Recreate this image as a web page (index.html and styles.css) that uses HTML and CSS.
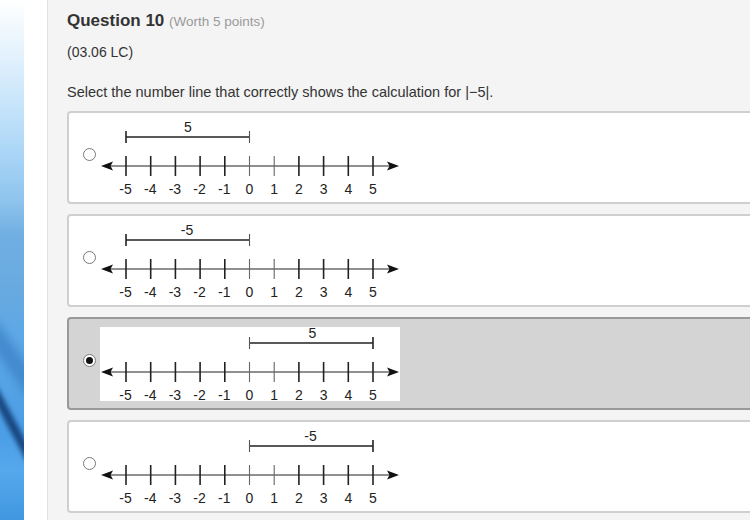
FILE: index.html
```html
<!DOCTYPE html>
<html>
<head>
<meta charset="utf-8">
<link rel="stylesheet" href="styles.css">
</head>
<body>
<div class="page">
  <div class="sidebar"></div>
  <div class="gutter"></div>
  <main class="main">
    <h1 class="title">Question 10 <span class="worth">(Worth 5 points)</span></h1>
    <p class="code">(03.06 LC)</p>
    <p class="prompt">Select the number line that correctly shows the calculation for |−5|.</p>
    <div class="options">
      <div class="option">
        <span class="radio"></span>
        <svg class="nl" viewBox="0 -5 300 84" width="300" height="84">
          <rect width="300" height="74" fill="#fff"/>
          <g stroke="#222" stroke-width="1.6">
            <line x1="10" y1="45" x2="290" y2="45" stroke-width="1.2"/>
            <line x1="26" y1="35" x2="26" y2="55"/><line x1="50.7" y1="35" x2="50.7" y2="55"/><line x1="75.4" y1="35" x2="75.4" y2="55"/><line x1="100.1" y1="35" x2="100.1" y2="55"/><line x1="124.8" y1="35" x2="124.8" y2="55"/><line x1="149.5" y1="35" x2="149.5" y2="55" stroke="#666" stroke-width="1.1"/><line x1="174.2" y1="35" x2="174.2" y2="55" stroke="#666" stroke-width="1.1"/><line x1="198.9" y1="35" x2="198.9" y2="55"/><line x1="223.6" y1="35" x2="223.6" y2="55"/><line x1="248.3" y1="35" x2="248.3" y2="55"/><line x1="273" y1="35" x2="273" y2="55"/>
            <line x1="26" y1="16" x2="149.5" y2="16"/><line x1="26" y1="10" x2="26" y2="22"/><line x1="149.5" y1="10" x2="149.5" y2="22" stroke="#555" stroke-width="1.1"/>
          </g>
          <path d="M1 45 L13 40.5 L10.5 45 L13 49.5 Z" fill="#111"/>
          <path d="M299 45 L287 40.5 L289.5 45 L287 49.5 Z" fill="#111"/>
          <g class="lbl" text-anchor="middle">
            <text x="88" y="10.5">5</text>
            <text x="25.5" y="73">-5</text><text x="50.2" y="73">-4</text><text x="74.9" y="73">-3</text><text x="99.6" y="73">-2</text><text x="124.3" y="73">-1</text><text x="149.5" y="73">0</text><text x="174.2" y="73">1</text><text x="198.9" y="73">2</text><text x="223.6" y="73">3</text><text x="248.3" y="73">4</text><text x="273" y="73">5</text>
          </g>
        </svg>
      </div>
      <div class="option">
        <span class="radio"></span>
        <svg class="nl" viewBox="0 -5 300 84" width="300" height="84">
          <rect width="300" height="74" fill="#fff"/>
          <g stroke="#222" stroke-width="1.6">
            <line x1="10" y1="45" x2="290" y2="45" stroke-width="1.2"/>
            <line x1="26" y1="35" x2="26" y2="55"/><line x1="50.7" y1="35" x2="50.7" y2="55"/><line x1="75.4" y1="35" x2="75.4" y2="55"/><line x1="100.1" y1="35" x2="100.1" y2="55"/><line x1="124.8" y1="35" x2="124.8" y2="55"/><line x1="149.5" y1="35" x2="149.5" y2="55" stroke="#666" stroke-width="1.1"/><line x1="174.2" y1="35" x2="174.2" y2="55" stroke="#666" stroke-width="1.1"/><line x1="198.9" y1="35" x2="198.9" y2="55"/><line x1="223.6" y1="35" x2="223.6" y2="55"/><line x1="248.3" y1="35" x2="248.3" y2="55"/><line x1="273" y1="35" x2="273" y2="55"/>
            <line x1="26" y1="16" x2="149.5" y2="16"/><line x1="26" y1="10" x2="26" y2="22"/><line x1="149.5" y1="10" x2="149.5" y2="22" stroke="#555" stroke-width="1.1"/>
          </g>
          <path d="M1 45 L13 40.5 L10.5 45 L13 49.5 Z" fill="#111"/>
          <path d="M299 45 L287 40.5 L289.5 45 L287 49.5 Z" fill="#111"/>
          <g class="lbl" text-anchor="middle">
            <text x="87" y="10.5">-5</text>
            <text x="25.5" y="73">-5</text><text x="50.2" y="73">-4</text><text x="74.9" y="73">-3</text><text x="99.6" y="73">-2</text><text x="124.3" y="73">-1</text><text x="149.5" y="73">0</text><text x="174.2" y="73">1</text><text x="198.9" y="73">2</text><text x="223.6" y="73">3</text><text x="248.3" y="73">4</text><text x="273" y="73">5</text>
          </g>
        </svg>
      </div>
      <div class="option selected">
        <span class="radio"></span>
        <svg class="nl" viewBox="0 -5 300 84" width="300" height="84">
          <rect width="300" height="74" fill="#fff"/>
          <g stroke="#222" stroke-width="1.6">
            <line x1="10" y1="45" x2="290" y2="45" stroke-width="1.2"/>
            <line x1="26" y1="35" x2="26" y2="55"/><line x1="50.7" y1="35" x2="50.7" y2="55"/><line x1="75.4" y1="35" x2="75.4" y2="55"/><line x1="100.1" y1="35" x2="100.1" y2="55"/><line x1="124.8" y1="35" x2="124.8" y2="55"/><line x1="149.5" y1="35" x2="149.5" y2="55" stroke="#666" stroke-width="1.1"/><line x1="174.2" y1="35" x2="174.2" y2="55" stroke="#666" stroke-width="1.1"/><line x1="198.9" y1="35" x2="198.9" y2="55"/><line x1="223.6" y1="35" x2="223.6" y2="55"/><line x1="248.3" y1="35" x2="248.3" y2="55"/><line x1="273" y1="35" x2="273" y2="55"/>
            <line x1="149.5" y1="16" x2="273" y2="16"/><line x1="149.5" y1="10" x2="149.5" y2="22" stroke="#555" stroke-width="1.1"/><line x1="273" y1="10" x2="273" y2="22"/>
          </g>
          <path d="M1 45 L13 40.5 L10.5 45 L13 49.5 Z" fill="#111"/>
          <path d="M299 45 L287 40.5 L289.5 45 L287 49.5 Z" fill="#111"/>
          <g class="lbl" text-anchor="middle">
            <text x="212.5" y="10.5">5</text>
            <text x="25.5" y="73">-5</text><text x="50.2" y="73">-4</text><text x="74.9" y="73">-3</text><text x="99.6" y="73">-2</text><text x="124.3" y="73">-1</text><text x="149.5" y="73">0</text><text x="174.2" y="73">1</text><text x="198.9" y="73">2</text><text x="223.6" y="73">3</text><text x="248.3" y="73">4</text><text x="273" y="73">5</text>
          </g>
        </svg>
      </div>
      <div class="option">
        <span class="radio"></span>
        <svg class="nl" viewBox="0 -5 300 84" width="300" height="84">
          <rect width="300" height="74" fill="#fff"/>
          <g stroke="#222" stroke-width="1.6">
            <line x1="10" y1="45" x2="290" y2="45" stroke-width="1.2"/>
            <line x1="26" y1="35" x2="26" y2="55"/><line x1="50.7" y1="35" x2="50.7" y2="55"/><line x1="75.4" y1="35" x2="75.4" y2="55"/><line x1="100.1" y1="35" x2="100.1" y2="55"/><line x1="124.8" y1="35" x2="124.8" y2="55"/><line x1="149.5" y1="35" x2="149.5" y2="55" stroke="#666" stroke-width="1.1"/><line x1="174.2" y1="35" x2="174.2" y2="55" stroke="#666" stroke-width="1.1"/><line x1="198.9" y1="35" x2="198.9" y2="55"/><line x1="223.6" y1="35" x2="223.6" y2="55"/><line x1="248.3" y1="35" x2="248.3" y2="55"/><line x1="273" y1="35" x2="273" y2="55"/>
            <line x1="149.5" y1="16" x2="273" y2="16"/><line x1="149.5" y1="10" x2="149.5" y2="22" stroke="#555" stroke-width="1.1"/><line x1="273" y1="10" x2="273" y2="22"/>
          </g>
          <path d="M1 45 L13 40.5 L10.5 45 L13 49.5 Z" fill="#111"/>
          <path d="M299 45 L287 40.5 L289.5 45 L287 49.5 Z" fill="#111"/>
          <g class="lbl" text-anchor="middle">
            <text x="210.5" y="10.5">-5</text>
            <text x="25.5" y="73">-5</text><text x="50.2" y="73">-4</text><text x="74.9" y="73">-3</text><text x="99.6" y="73">-2</text><text x="124.3" y="73">-1</text><text x="149.5" y="73">0</text><text x="174.2" y="73">1</text><text x="198.9" y="73">2</text><text x="223.6" y="73">3</text><text x="248.3" y="73">4</text><text x="273" y="73">5</text>
          </g>
        </svg>
      </div>
    </div>
  </main>
</div>
</body>
</html>
```
FILE: styles.css
```css
html, body {
  margin: 0;
  padding: 0;
  width: 750px;
  height: 520px;
  overflow: hidden;
  background: #f4f4f4;
}
body {
  font-family: "Liberation Sans", Arial, sans-serif;
  color: #333;
}
.page {
  display: flex;
  height: 520px;
}
.sidebar {
  position: relative;
  overflow: hidden;
  flex: 0 0 24px;
  background: linear-gradient(180deg,
    #ffffff 0px,
    #e6f3fd 50px,
    #c4e3fa 110px,
    #a6d3f6 160px,
    #8fc4ed 200px,
    #70afe2 235px,
    #68aae0 290px,
    #5ea8e6 330px,
    #56a3e4 380px,
    #4a9de6 430px,
    #55a8ec 470px,
    #4198e0 520px);
}
.sidebar::before {
  content: "";
  position: absolute;
  left: -28px;
  top: 350px;
  width: 80px;
  height: 18px;
  background: #3a7fc4;
  filter: blur(5px);
  transform: rotate(55deg);
  opacity: 0.7;
}
.sidebar::after {
  content: "";
  position: absolute;
  left: -28px;
  top: 420px;
  width: 80px;
  height: 9px;
  background: #17467f;
  filter: blur(2.5px);
  transform: rotate(62deg);
}
.gutter {
  flex: 0 0 23px;
  background: #fff;
}
.main {
  flex: 1 0 auto;
  border-left: 1px solid #e2e2e2;
  padding: 11px 0 0 19px;
  background: #f4f4f4;
}
.title {
  margin: 0;
  font-size: 17px;
  line-height: 20px;
  font-weight: bold;
  color: #333;
}
.worth {
  font-size: 13.5px;
  font-weight: normal;
  color: #9a9a9a;
}
.code {
  margin: 11px 0 0;
  font-size: 14px;
  line-height: 18px;
}
.prompt {
  margin: 22px 0 0;
  font-size: 14.5px;
  line-height: 18px;
}
.options {
  margin-top: 10px;
  width: 700px;
  display: flex;
  flex-direction: column;
  gap: 10px;
}
.option {
  box-sizing: border-box;
  height: 93px;
  border: 2px solid #cfcfcf;
  border-radius: 4px;
  background: #fff;
  display: flex;
  align-items: flex-start;
  padding: 3px 0 0 14px;
}
.option.selected {
  background: #d4d4d4;
  border-color: #999;
}
.radio {
  box-sizing: border-box;
  width: 13px;
  height: 13px;
  margin-top: 32px;
  margin-right: 4px;
  border-radius: 50%;
  border: 1px solid #7a7a7a;
  background: #fff;
  flex: 0 0 auto;
  display: flex;
  align-items: center;
  justify-content: center;
}
.option.selected .radio::after {
  content: "";
  width: 7px;
  height: 7px;
  border-radius: 50%;
  background: #111;
}
.nl {
  display: block;
  flex: 0 0 auto;
}
.lbl text {
  font-family: "Liberation Sans", Arial, sans-serif;
  font-size: 14px;
  fill: #222;
}
```
